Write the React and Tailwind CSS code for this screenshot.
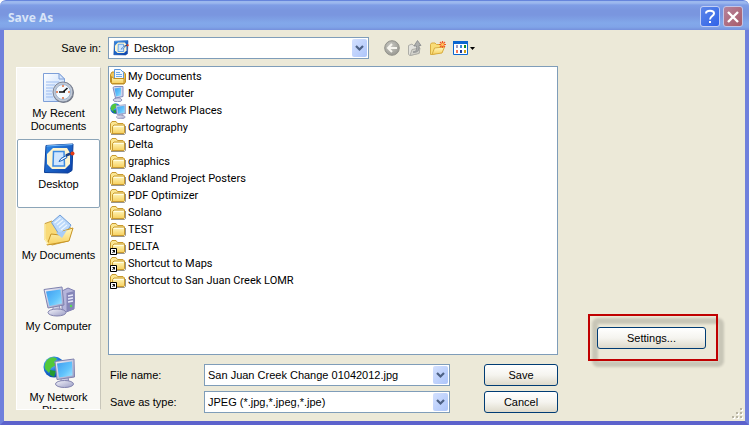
import clsx from "clsx";

const Gradients = () => (
  <svg className="absolute h-0 w-0" aria-hidden="true">
    <defs>
      <linearGradient id="folder" x1="0" y1="0" x2="0" y2="1">
        <stop offset="0" stopColor="#fff9c4" />
        <stop offset="1" stopColor="#f7cf5c" />
      </linearGradient>
      <linearGradient id="screen" x1="0" y1="0" x2="1" y2="1">
        <stop offset="0" stopColor="#3f9df0" />
        <stop offset="0.6" stopColor="#62c4fc" />
        <stop offset="1" stopColor="#a4e6ff" />
      </linearGradient>
      <linearGradient id="metal" x1="0" y1="0" x2="1" y2="1">
        <stop offset="0" stopColor="#f4f4fb" />
        <stop offset="1" stopColor="#9a9cc4" />
      </linearGradient>
      <linearGradient id="paper" x1="0" y1="0" x2="1" y2="1">
        <stop offset="0" stopColor="#ffffff" />
        <stop offset="1" stopColor="#b8d4fa" />
      </linearGradient>
      <linearGradient id="blue" x1="0" y1="0" x2="1" y2="1">
        <stop offset="0" stopColor="#2f8ae8" />
        <stop offset="1" stopColor="#0a3fa8" />
      </linearGradient>
      <radialGradient id="globe" cx="0.35" cy="0.3" r="0.8">
        <stop offset="0" stopColor="#8fd0ff" />
        <stop offset="0.5" stopColor="#1d78dc" />
        <stop offset="1" stopColor="#0a3a9c" />
      </radialGradient>
      <radialGradient id="disc" cx="0.4" cy="0.35" r="0.7">
        <stop offset="0" stopColor="#c9c9c3" />
        <stop offset="1" stopColor="#979790" />
      </radialGradient>
    </defs>
  </svg>
);

const RecentIcon = ({ size = 32 }) => (
  <svg width={size} height={size} viewBox="0 0 32 32">
    <path d="M.5 1.500H16l5.500 5.500V29.500H.5Z" fill="url(#paper)" stroke="#7d9fd8" />
    <path d="M16 1.500V7h5.500Z" fill="#d7e6fb" stroke="#7d9fd8" />
    <path d="M3 10h13M3 13h9M3 16h7M3 19h6M3 22h6M3 25h7" stroke="#9dbdf0" />
    <circle cx="20.500" cy="20.500" r="10.500" fill="#6f7480" />
    <circle cx="20" cy="20" r="10" fill="#c2cad6" stroke="#80889a" />
    <circle cx="20" cy="20" r="7.500" fill="#f4faff" stroke="#9fb4cf" />
    <path d="M20 20l4.500-4M22 20h-6" stroke="#111" strokeWidth="1.600" />
    <path d="M20 13v2M20 25v2M13 20h2M25 20h2" stroke="#e07040" strokeWidth="1.500" />
  </svg>
);

const DesktopIcon = ({ size = 32 }) => (
  <svg width={size} height={size} viewBox="0 0 32 32">
    <path d="M3 2.500 30 1l-1 26.500-4 2.500L1.500 29.500Z" fill="url(#blue)" stroke="#0b3f98" />
    <path d="M3.500 3 29.500 1.500" stroke="#79bcf8" />
    <path d="M10 5h14l3 5v11l-5 5H9l-5-5V11Z" fill="#fff5cf" />
    <path d="M10.500 8.500H21l.5 14.500H10Z" fill="#cfe6ff" stroke="#3c8be2" strokeWidth="1.500" />
    <path d="m16 18.500 2-3 5-2.800 1 1.800-5 3Z" fill="#f4fbff" stroke="#1860bd" />
    <path d="m23 12.500 6-2.500" stroke="#1b3f80" strokeWidth="2.500" />
    <circle cx="29.500" cy="10.500" r="2" fill="#e43b16" />
  </svg>
);

const DocumentsIcon = ({ size = 32 }) => (
  <svg width={size} height={size} viewBox="0 0 32 32">
    <path d="M2 9.500 9 7l3 3 13 2 4 3-4 12-16 4-7-5Z" fill="#f9da76" stroke="#c9a040" />
    <path d="M8.500 8.500 17 1l11 10-9 14Z" fill="#bcd9fb" stroke="#709ed9" />
    <path d="m11.500 9 6-5M14 11l6-5M16 13.500l6-5M18 16l6-5" stroke="#ecf6ff" strokeWidth="1.300" />
    <path d="M4 31 8 20l9 1 3-4 10-3-4 13Z" fill="url(#folder)" stroke="#c89424" />
    <path d="m13 19 11-3-5 8Z" fill="#a9cdf7" />
    <path d="M2 10v15l3 5" fill="none" stroke="#fff0a8" strokeWidth="1.500" />
  </svg>
);

const ComputerIcon = ({ size = 32 }) => (
  <svg width={size} height={size} viewBox="0 0 32 32">
    <path d="m19 6 6-3 7 3-1 18-8 3-4-3Z" fill="#b5b5db" stroke="#7e7eb0" />
    <path d="m23.500 8 8-2-.5 18-7.500 3Z" fill="#8586b8" />
    <path d="m25 11 5-1M25 14l5-1M25 17l5-1" stroke="#e5e6fa" strokeWidth="1.300" />
    <circle cx="28" cy="21" r="1.200" fill="#54e04e" />
    <path d="m10 21 6-1 2 7h-8Z" fill="url(#metal)" stroke="#8a8bb8" />
    <ellipse cx="14" cy="27.500" rx="9" ry="3.500" fill="url(#metal)" stroke="#8283ae" />
    <path d="M1 4.500 19 2l2 18L5 23Z" fill="url(#metal)" stroke="#7f82ae" />
    <path d="m3 6.500 14.500-2L19 18.500 6.500 21Z" fill="url(#screen)" />
  </svg>
);

const NetworkIcon = ({ size = 32 }) => (
  <svg width={size} height={size} viewBox="0 0 32 32">
    <circle cx="11" cy="11" r="10.500" fill="url(#globe)" />
    <path d="M4 4c4-4 8-3 10-1l-3 3 2 3-5 3-2 5-4-4c-1-3 0-6 2-9Z" fill="#52c83a" />
    <path d="m7 14 6 1-2 6-4-2Z" fill="#239b30" />
    <path d="m18 22 7-1 1 6h-8Z" fill="url(#metal)" stroke="#8a8bb8" />
    <ellipse cx="21.500" cy="28" rx="9" ry="3.500" fill="url(#metal)" stroke="#8283ae" />
    <path d="M12 5.500 31 3l.5 18L14 23.500Z" fill="url(#metal)" stroke="#7f82ae" />
    <path d="m14 7.500 15-2 .5 14L16 21.500Z" fill="url(#screen)" />
  </svg>
);

const FolderIcon = ({ shortcut }) => (
  <svg width="16" height="16" viewBox="0 0 16 16" className="shrink-0">
    <path d="M1 14.500h13.500l1-1V6" fill="none" stroke="#9a958a" />
    <path d="M.5 3.500 2 1.500h4l1.500 2h5.500l1 1v9H1.500l-1-1Z" fill="#fbe691" stroke="#c99a30" />
    <path d="M2.500 6.500 4 5h10.500v7.500l-1 1h-11Z" fill="url(#folder)" stroke="#c99a30" />
    <path d="M4 6.500h9.500" stroke="#fffde2" />
    {shortcut && (
      <g>
        <path d="M.5 9.500h6v6h-6Z" fill="#fff" stroke="#000" />
        <path d="M2.500 11.500h2v2M4.500 11.500l-2 2.500" fill="none" stroke="#000" />
      </g>
    )}
  </svg>
);

const MyDocsSmall = () => (
  <svg width="16" height="16" viewBox="0 0 16 16" className="shrink-0">
    <path d="M.5 5.500 2 3H14l1.500 2v8l-1.500 2H2L.5 13Z" fill="#f0c55c" stroke="#c08f25" />
    <path d="M4.500.5h6l3 3V10h-9Z" fill="#eef6ff" stroke="#5b96dd" />
    <path d="M6 3.500h4M6 5.500h6M6 7.500h6" stroke="#70a9ea" />
    <path d="M1.500 7.500 4 9.500h10v5H2.500l-1-1Z" fill="url(#folder)" stroke="#c08f25" />
  </svg>
);

const ComputerSmall = () => (
  <svg width="16" height="16" viewBox="0 0 16 16" className="shrink-0">
    <ellipse cx="7.500" cy="14" rx="4.500" ry="1.700" fill="#d7d8eb" stroke="#9394ba" />
    <path d="m6 11 4-1v3H6Z" fill="#b9bada" />
    <path d="m3 1.500 1.500-1L13 .5v10L5.500 12Z" fill="#d0d4ee" stroke="#858bbb" />
    <path d="m4.500 2.500 6.500-1v8l-5 1Z" fill="url(#screen)" />
  </svg>
);

const places = [
  { label: "My Recent Documents", Icon: RecentIcon, wrap: true },
  { label: "Desktop", Icon: DesktopIcon, active: true },
  { label: "My Documents", Icon: DocumentsIcon },
  { label: "My Computer", Icon: ComputerIcon },
  { label: "My Network Places", Icon: NetworkIcon, wrap: true },
];

const files = [
  { name: "My Documents", icon: <MyDocsSmall /> },
  { name: "My Computer", icon: <ComputerSmall /> },
  { name: "My Network Places", icon: <NetworkIcon size={16} /> },
  { name: "Cartography" },
  { name: "Delta" },
  { name: "graphics" },
  { name: "Oakland Project Posters" },
  { name: "PDF Optimizer" },
  { name: "Solano" },
  { name: "TEST" },
  { name: "DELTA", shortcut: true },
  { name: "Shortcut to Maps", shortcut: true },
  { name: "Shortcut to San Juan Creek LOMR", shortcut: true },
];

const Arrow = () => (
  <span className="flex h-[18px] w-[15px] items-center justify-center rounded-xs bg-linear-to-br from-[#d3e0fe] to-[#adc5fa]">
    <svg width="9" height="7" viewBox="0 0 9 7">
      <path d="m1 1 3.500 3.500L8 1" fill="none" stroke="#4d6185" strokeWidth="2.200" />
    </svg>
  </span>
);

const Select = ({ id, value, icon, className }) => (
  <div className={clsx("relative h-[22px] border border-[#7f9db9] bg-white", className)}>
    {icon && <span className="pointer-events-none absolute left-1 top-0.5">{icon}</span>}
    <select
      id={id}
      className={clsx("block h-5 w-full appearance-none bg-transparent pr-5 outline-none", icon ? "pl-[25px]" : "pl-[3px]")}
    >
      <option>{value}</option>
    </select>
    <span className="pointer-events-none absolute right-px top-px">
      <Arrow />
    </span>
  </div>
);

const PushButton = ({ className, children }) => (
  <button
    className={clsx(
      "relative h-[22px] rounded-[3px] border border-[#003c74] bg-linear-to-b from-white via-[#f5f4ef] to-[#dedacb] text-center",
      className
    )}
  >
    {children}
  </button>
);

const TitleBar = () => (
  <header className="flex h-[30px] items-center justify-between rounded-t-md border-t border-[#6685dc] bg-[linear-gradient(#9cb8ee_0px,#9cb8ee_2px,#7f9ee6_4px,#7a96df_9px,#7a96df_14px,#82a8ea_22px,#80a4e8_26px,#7590dc_29px)] pl-2 pr-1.5 pt-0.5">
    <h1 className="pt-0.5 font-['Noto_Sans',sans-serif] text-[12px] font-bold text-[#d8e4f8]">Save As</h1>
    <div className="flex gap-[3px]">
      <button
        aria-label="Help"
        className="flex h-[21px] w-5 items-center justify-center rounded-[3px] border border-[#c3cff5] bg-linear-to-br from-[#5d86e8] to-[#2f62e8]"
      >
        <svg width="12" height="15" viewBox="0 0 12 15" fill="none" stroke="#fff" strokeWidth="2">
          <path d="M2 4.500C2 .8 10 .8 10 4.500 10 7 6 7 6 10.500M6 12v2" />
        </svg>
      </button>
      <button
        aria-label="Close"
        className="flex h-[21px] w-5 items-center justify-center rounded-[3px] border border-[#c3c5e6] bg-linear-to-br from-[#b5839c] to-[#a85a68]"
      >
        <svg width="12" height="12" viewBox="0 0 12 12" stroke="#fff" strokeWidth="2.400">
          <path d="m1 1 10 10M11 1 1 11" />
        </svg>
      </button>
    </div>
  </header>
);

const Toolbar = () => (
  <div className="flex items-center gap-[7px] pl-[15px]">
    <button aria-label="Back">
      <svg width="16" height="16" viewBox="0 0 16 16">
        <circle cx="8" cy="8" r="7.300" fill="url(#disc)" stroke="#92928b" />
        <path d="M13 8H4M8 4 4 8l4 4" fill="none" stroke="#f6f5ee" strokeWidth="2" />
      </svg>
    </button>
    <button aria-label="Up One Level">
      <svg width="16" height="16" viewBox="0 0 16 16">
        <path d="M1.500 5.500 5 4l1.500 1.500h4l2 2V13L3 15.500l-1.500-1Z" fill="#e3e3de" stroke="#adada7" />
        <path d="m3 15.500 2-6 8-1.500-1 5.500Z" fill="#d2d2cc" stroke="#adada7" />
        <path d="M6 12c3 0 4-2 3.500-6H7l3.500-5.500L14 5.500h-2c.5 5-1.500 7.500-6 6.500Z" fill="#aeb0ae" stroke="#85888a" strokeWidth="0.800" />
      </svg>
    </button>
    <button aria-label="Create New Folder">
      <svg width="16" height="16" viewBox="0 0 16 16">
        <path d="M.5 4.500 1.500 3H5l1.500 1.500H12V12l-10 2.500H.5Z" fill="#f9dd78" stroke="#d8ad42" />
        <path d="M2 14.500 4.500 8l10-1L12 13Z" fill="url(#folder)" stroke="#d8ad42" />
        <path d="M12.500 1v7M9 4.500h7M10 2l5 5M15 2l-5 5" stroke="#f05a22" strokeWidth="1.200" />
        <circle cx="12.500" cy="4.500" r="1.500" fill="#ffc45c" />
      </svg>
    </button>
    <button aria-label="View Menu">
      <svg width="23" height="16" viewBox="0 0 23 16">
        <path d="M.5 1.500h14v13H.5Z" fill="#fff" stroke="#0b66d0" />
        <path d="M0 1h15v3H0Z" fill="#0b66d0" />
        <path d="M3 5h2v3H3Z" fill="#a09cc0" />
        <path d="M7 5h2v3H7Z" fill="#3388dc" />
        <path d="M11 5h2v3h-2Z" fill="#148c24" />
        <path d="M3 10h2v3H3Z" fill="#f2785a" />
        <path d="M7 10h2v3H7Z" fill="#1c3c98" />
        <path d="M11 10h2v3h-2Z" fill="#cca018" />
        <path d="M17 7h5l-2.500 3Z" fill="#000" />
      </svg>
    </button>
  </div>
);

const Places = () => (
  <nav className="h-[343px] w-[85px] shrink-0 overflow-hidden border border-white border-r-[#c8c6ba] bg-[#f9f8f4]">
    {places.map(({ label, Icon, active, wrap }) => (
      <button key={label} className="block h-[71px] w-full pb-0.5">
        <span
          className={clsx(
            "flex h-full flex-col items-center gap-[3px] rounded-xs border px-2 pt-[3px] leading-[13px]",
            active ? "border-[#8ca5b8] bg-white" : "border-transparent"
          )}
        >
          <span className="shrink-0">
            <Icon />
          </span>
          <span className={clsx(!wrap && "whitespace-nowrap")}>{label}</span>
        </span>
      </button>
    ))}
  </nav>
);

const FileList = () => (
  <ul className="min-h-[289px] flex-1 border border-[#7f9db9] bg-white p-px font-[Roboto,sans-serif] leading-[17px]">
    {files.map((file) => (
      <li key={file.name} className="flex h-[17px] items-center gap-0.5">
        {file.icon || <FolderIcon shortcut={file.shortcut} />}
        {file.name}
      </li>
    ))}
  </ul>
);

const SettingsCallout = () => (
  <div className="relative w-[130px] pb-3 pl-[9px] pr-3 pt-[13px]">
    <div className="absolute -bottom-1.5 -right-1.5 left-1 top-1 rounded-md border-[6px] border-black/15 blur-[1px]" />
    <div className="absolute inset-0 border-2 border-[#c00000]" />
    <PushButton className="block w-full">Settings...</PushButton>
  </div>
);

const App = () => (
  <main className="relative flex min-h-screen flex-col bg-white font-['Liberation_Sans',sans-serif] text-[11px] text-black">
    <Gradients />
    <TitleBar />
    <div className="relative flex-1 border-x-4 border-b-4 border-[#6f80dc] border-b-[#5c62cc] bg-[#ece9d8] pb-2 pl-3 pt-[7px]">
      <div className="flex items-center">
        <label htmlFor="save-in" className="w-[85px] text-right">
          Save in:
        </label>
        <Select id="save-in" value="Desktop" icon={<DesktopIcon size={16} />} className="ml-[7px] w-[261px]" />
        <Toolbar />
      </div>

      <div className="mt-[7px] flex">
        <div className="pt-px">
          <Places />
        </div>
        <div className="ml-[7px] flex flex-1 flex-col">
          <FileList />
          <div className="mt-[9px] grid grid-cols-[96px_1fr_74px] items-center gap-y-[5px]">
            <label htmlFor="file-name" className="pl-0.5">
              File name:
            </label>
            <div className="mr-[34px] flex h-[22px] items-center border border-[#7f9db9] bg-white pr-px">
              <input
                id="file-name"
                defaultValue="San Juan Creek Change 01042012.jpg"
                className="h-5 min-w-0 flex-1 pl-[3px] outline-none"
              />
              <button aria-label="Show recent names">
                <Arrow />
              </button>
            </div>
            <PushButton>Save</PushButton>
            <label htmlFor="file-type" className="pl-0.5">
              Save as type:
            </label>
            <Select id="file-type" value="JPEG (*.jpg,*.jpeg,*.jpe)" className="mr-[34px]" />
            <PushButton>Cancel</PushButton>
          </div>
        </div>
        <div className="flex w-[187px] shrink-0 flex-col justify-end pb-[52px] pl-[30px]">
          <SettingsCallout />
        </div>
      </div>

      <svg width="12" height="12" viewBox="0 0 12 12" className="absolute bottom-px right-px">
        <path d="M9 1h2v2H9ZM5 5h2v2H5ZM9 5h2v2H9ZM1 9h2v2H1ZM5 9h2v2H5ZM9 9h2v2H9Z" fill="#fff" />
        <path d="M8 0h2v2H8ZM4 4h2v2H4ZM8 4h2v2H8ZM0 8h2v2H0ZM4 8h2v2H4ZM8 8h2v2H8Z" fill="#b8b4a2" />
      </svg>
    </div>
  </main>
);

export default App;
